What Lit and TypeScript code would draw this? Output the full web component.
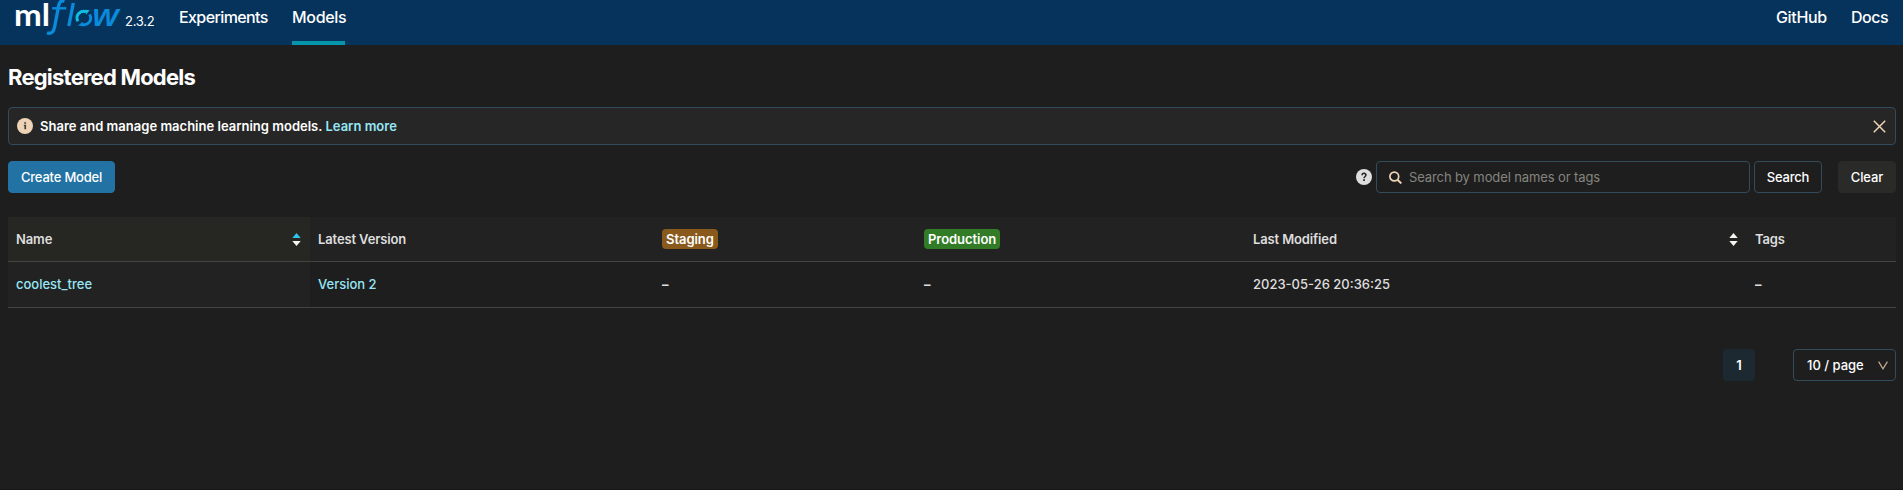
import { LitElement, html, css } from "lit";
import { customElement, state } from "lit/decorators.js";

interface Model {
  name: string;
  version: string;
  staging: string;
  production: string;
  modified: string;
  tags: string;
}

@customElement("ml-logo")
class MlLogo extends LitElement {
  static styles = css`
    :host { display: block; width: 108px; height: 38px; }
    svg { display: block; overflow: visible; }
    .ml { font: 700 31px Lato, sans-serif; fill: #fff; }
    .flow { font: italic 600 30px "Open Sans", sans-serif; fill: #0a8bdc; }
  `;
  render() {
    return html`<svg width="108" height="38" viewBox="0 0 108 38">
      <text class="ml" x="1" y="26" textLength="36" lengthAdjust="spacingAndGlyphs">ml</text>
      <g fill="none" stroke="#0a8bdc" stroke-width="3.300">
        <path d="M51.500 1.200C47.800 0 46.400 2.200 45.600 6L41.700 26.500C40.800 31.500 38.800 34.300 34 32.900" />
        <path d="M39.200 8.300H53.300" stroke-width="2.400" />
        <path d="M60.300 3L55.800 26" />
        <path d="M76.500 14.500A6.500 6.500 0 0 1 69 24.300" stroke-width="2.900" />
        <path d="M65 21.300A6.500 6.500 0 0 1 72.800 11.800" stroke="#10bde4" stroke-width="2.900" />
      </g>
      <path d="M72 9.800L76.700 10.200L73 14.500Z" fill="#10bde4" />
      <path d="M69.800 21.800L65 25.600L69.800 26.200Z" fill="#0a8bdc" />
      <text class="flow" x="79" y="26" textLength="27" lengthAdjust="spacingAndGlyphs">w</text>
    </svg>`;
  }
}

@customElement("sort-arrows")
class SortArrows extends LitElement {
  static properties = { ascending: { type: Boolean, reflect: true } };
  static styles = css`
    :host { display: block; width: 9px; height: 13px; }
    svg { display: block; fill: #f5f5f0; }
    :host([ascending]) .up { fill: #2fc6ee; }
  `;
  render() {
    return html`<svg width="9" height="13" viewBox="0 0 9 13">
      <path class="up" d="M4.500 0L8.700 5H.3Z" /><path d="M.3 8H8.700L4.500 13Z" />
    </svg>`;
  }
}

@customElement("app-root")
class AppRoot extends LitElement {
  @state() private models: Model[] = [
    { name: "coolest_tree", version: "Version 2", staging: "–", production: "–", modified: "2023-05-26 20:36:25", tags: "–" },
  ];

  static styles = css`
    :host {
      display: block; box-sizing: border-box; min-height: 490px; background: #1e1e1e;
      border-bottom: 1px solid #171517;
      color: #fff; font: 500 13px/20px Inter, "Liberation Sans", sans-serif;
    }
    * { box-sizing: border-box; }
    header { display: flex; height: 45px; background: #05335c; font-size: 16px; line-height: 22px; }
    .logo { flex: none; margin-left: 13px; }
    .release { width: 58px; padding: 10px 0 0 4px; font-size: 13px; font-weight: 400; letter-spacing: -.25px; }
    nav { display: flex; gap: 24px; }
    nav a { height: 45px; padding-top: 6px; border-bottom: 4px solid transparent; white-space: nowrap; }
    nav .active { border-color: #0596ac; }
    .experiments { width: 89px; letter-spacing: -.6px; }
    .models { width: 53px; letter-spacing: -.3px; }
    .links { margin-left: auto; margin-right: 15px; }
    .github { width: 51px; letter-spacing: -.35px; }
    .docs { width: 37px; letter-spacing: -.45px; }
    main { padding: 18px 7px 0 8px; }
    h1 { margin: 0; font-size: 22px; line-height: 28px; font-weight: 650; letter-spacing: -.78px; }
    .alert {
      display: flex; align-items: center; height: 38px; margin-top: 16px; padding: 0 9px 0 8px;
      background: #262626; border: 1px solid #334c5b; border-radius: 4px; font-weight: 600;
    }
    svg { display: block; flex: none; }
    .message { margin-left: 7px; letter-spacing: .01px; }
    .link { color: #97e6f5; }
    .alert .close { margin-left: auto; }
    .toolbar { display: flex; align-items: center; height: 32px; margin-top: 16px; }
    .btn {
      height: 32px; border: 1px solid #334c5b; border-radius: 4px; padding: 0;
      background: #1e1e1e; color: #fff; font: inherit; text-align: center;
    }
    .create { width: 107px; background: #2272a3; border-color: #2272a3; letter-spacing: -.2px; }
    .help { margin-left: auto; }
    .search {
      display: flex; align-items: center; width: 374px; height: 32px; margin-left: 4px; padding-left: 12px;
      border: 1px solid #334c5b; border-radius: 4px; color: #85857f; font-weight: 400;
    }
    .search span { margin-left: 7px; letter-spacing: -.11px; }
    .find { width: 68px; margin-left: 4px; letter-spacing: -.2px; }
    .clear { width: 58px; margin-left: 16px; background: #2a2a29; border-color: #2a2a29; letter-spacing: -.1px; }
    .table { margin-top: 24px; }
    .row {
      display: grid; grid-template-columns: 302px 344px 262px 329px 502px 149px;
      height: 46px; border-bottom: 1px solid #434443; color: #dedede; font-weight: 450;
    }
    .row > div { display: flex; align-items: center; padding: 0 8px 2px; letter-spacing: 0; }
    .row > .dash { font-weight: 700; }
    .row > .name { background: #222; }
    .row.head { height: 45px; background: #222; font-weight: 600; }
    .row.head > .name { background: #262623; }
    .row.head > div { justify-content: space-between; padding: 0 9px 0 8px; letter-spacing: -.13px; }
    .row .tag { height: 20px; padding: 0 4px; border-radius: 4px; color: #fff; font-weight: 600; letter-spacing: -.05px; }
    .staging { background: #8a5a1c; }
    .production { background: #327c27; }
    .pager { display: flex; justify-content: flex-end; gap: 38px; margin-top: 41px; }
    .page { width: 32px; height: 32px; border-radius: 4px; background: #1d2930; text-align: center; line-height: 32px; font-weight: 600; }
    .size {
      display: flex; align-items: center; justify-content: space-between; width: 103px; height: 32px;
      padding: 0 7px 0 13px; border: 1px solid #334c5b; border-radius: 4px;
    }
  `;

  render() {
    return html`
      <header>
        <ml-logo class="logo"></ml-logo>
        <span class="release">2.3.2</span>
        <nav><a class="experiments">Experiments</a><a class="models active">Models</a></nav>
        <nav class="links"><a class="github">GitHub</a><a class="docs">Docs</a></nav>
      </header>
      <main>
        <h1>Registered Models</h1>
        <div class="alert">
          <svg width="16" height="16" viewBox="0 0 16 16">
            <circle cx="8" cy="8" r="8" fill="#efd3b6" />
            <path d="M7.200 4.300h1.900v1.500H7.200zM6.800 6.800h2.300v4.500H7.400V8H6.800z" fill="#423c36" />
          </svg>
          <span class="message">Share and manage machine learning models. <a class="link">Learn more</a></span>
          <svg class="close" width="13" height="13" viewBox="0 0 13 13">
            <path d="M.8.8L12.200 12.200M12.200.8L.8 12.200" stroke="#efd3b6" stroke-width="1.500" />
          </svg>
        </div>
        <div class="toolbar">
          <button class="btn create">Create Model</button>
          <svg class="help" width="16" height="16" viewBox="0 0 16 16">
            <circle cx="8" cy="8" r="8" fill="#dedede" />
            <path d="M6.100 6.300C6.100 3.700 10 3.800 10 6.100C10 7.500 8 7.500 8 9.300" fill="none" stroke="#222" stroke-width="1.500" />
            <path d="M7.200 10.300h1.700v1.600H7.200z" fill="#222" />
          </svg>
          <div class="search">
            <svg width="13" height="13" viewBox="0 0 13 13" fill="none" stroke="#efd3b6">
              <circle cx="5.300" cy="5.500" r="4.400" stroke-width="1.700" />
              <path d="M8.500 8.700L12.300 12.400" stroke-width="2" />
            </svg>
            <span>Search by model names or tags</span>
          </div>
          <button class="btn find">Search</button>
          <button class="btn clear">Clear</button>
        </div>
        <div class="table">
          <div class="row head">
            <div class="name"><span>Name</span><sort-arrows ascending></sort-arrows></div>
            <div><span>Latest Version</span></div>
            <div><span class="tag staging">Staging</span></div>
            <div><span class="tag production">Production</span></div>
            <div><span>Last Modified</span><sort-arrows></sort-arrows></div>
            <div><span>Tags</span></div>
          </div>
          ${this.models.map((m) => html`
            <div class="row">
              <div class="name link">${m.name}</div>
              <div class="link">${m.version}</div>
              <div class="dash">${m.staging}</div>
              <div class="dash">${m.production}</div>
              <div>${m.modified}</div>
              <div class="dash">${m.tags}</div>
            </div>`)}
        </div>
        <div class="pager">
          <span class="page">1</span>
          <div class="size">
            <span>10 / page</span>
            <svg width="10" height="9" viewBox="0 0 10 9">
              <path d="M.6.6L5 7.800L9.400.6" fill="none" stroke="#c9ae94" stroke-width="1.200" />
            </svg>
          </div>
        </div>
      </main>
    `;
  }
}
